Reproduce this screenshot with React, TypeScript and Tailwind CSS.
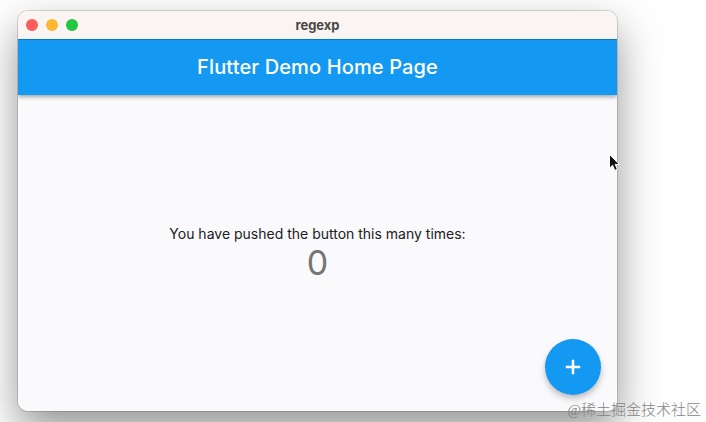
function TrafficLights() {
  return (
    <div className="flex gap-2">
      <span className="size-3 rounded-full bg-[#fc5c5c]" />
      <span className="size-3 rounded-full bg-[#fdb733]" />
      <span className="size-3 rounded-full bg-[#23c641]" />
    </div>
  );
}

function TitleBar() {
  return (
    <div className="grid h-[28px] shrink-0 grid-cols-3 items-center border-b-2 border-[#f4fbfb] bg-[#faf5f3] px-2 pt-[2px]">
      <TrafficLights />
      <span className="text-center text-[13px] leading-5 font-bold text-[#4b4747]">regexp</span>
      <span />
    </div>
  );
}

function AppBar() {
  return (
    <header className="z-10 flex h-14 shrink-0 items-center justify-center border-t border-[#1673b5] bg-[#1499f2] pb-[2px] shadow-[0_2px_4px_rgba(0,0,0,0.34)]">
      <h1 className="text-[20px] leading-7 font-medium tracking-[0.13px] text-white">Flutter Demo Home Page</h1>
    </header>
  );
}

function Cursor() {
  return (
    <svg className="absolute top-[153px] left-[608px] h-[19px] w-[13px]" viewBox="0 0 13 19" aria-hidden="true">
      <path d="M1.5 1.5V15.2L4.6 12.3L6.8 17.4L9.4 16.3L7.2 11.4H11.5Z" fill="#111" stroke="#fff" strokeWidth="1" />
    </svg>
  );
}

export default function App() {
  return (
    <div className="relative h-[422px] w-[706px] overflow-hidden bg-[#fefefe] pt-[11px] pl-[18px] font-['Inter','Liberation_Sans',sans-serif]">
      <main className="flex h-[400px] w-[599px] flex-col rounded-[10px] shadow-[0_0_0_1px_rgba(0,0,0,0.14),0_18px_40px_rgba(0,0,0,0.42)]">
        <div className="flex flex-1 flex-col overflow-hidden rounded-[10px] bg-[#fafafc]">
          <TitleBar />
          <AppBar />
          <section className="flex flex-1 flex-col">
            <div className="flex flex-1 flex-col items-center pt-[130px]">
              <p className="text-[14px] leading-[18px] text-[#202022]">
                You have pushed the button this many times:
              </p>
              <p className="text-[34px] leading-10 text-[#757576]">0</p>
            </div>
            <div className="flex justify-end pr-4 pb-4">
              <button
                aria-label="Increment"
                className="flex size-14 items-center justify-center rounded-full bg-[#1499f2] shadow-[0_3px_5px_rgba(0,0,0,0.16),0_5px_9px_rgba(0,0,0,0.1)]"
              >
                <svg className="size-6" viewBox="0 0 24 24" fill="white" stroke="white" strokeWidth="0.5">
                  <path d="M19 13h-6v6h-2v-6H5v-2h6V5h2v6h6v2z" />
                </svg>
              </button>
            </div>
          </section>
        </div>
      </main>
      <Cursor />
      <span className="absolute right-[5px] bottom-[2px] text-[15px] leading-5 font-light whitespace-nowrap text-[#858585] font-['Liberation_Serif','Noto_Sans_CJK_SC',serif]">
        @稀土掘金技术社区
      </span>
    </div>
  );
}
